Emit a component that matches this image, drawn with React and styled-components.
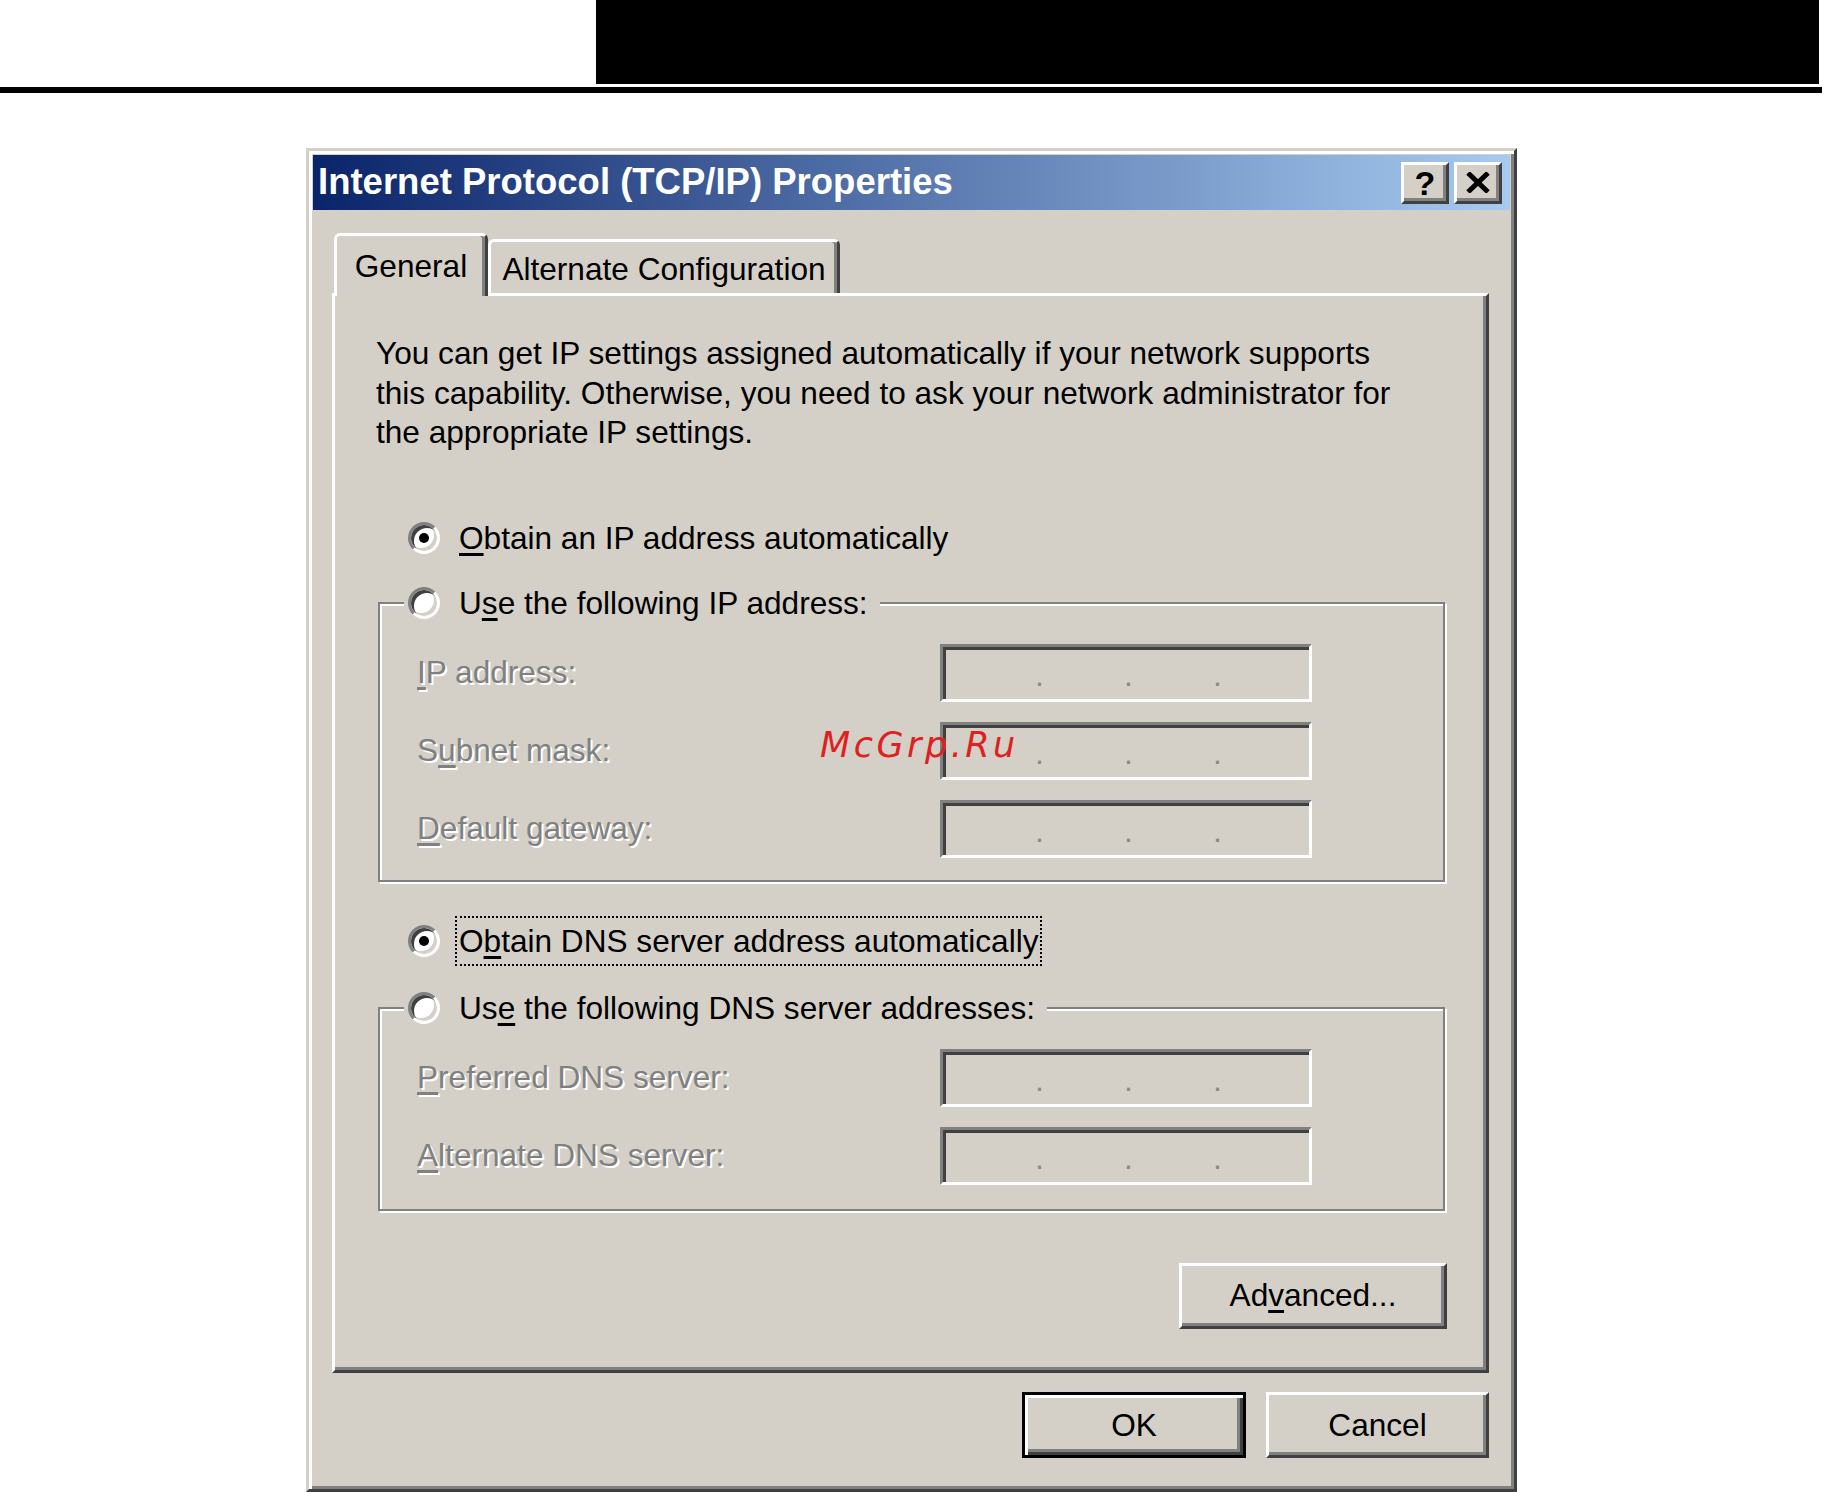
import React from "react";
import styled, { createGlobalStyle } from "styled-components";

const FACE = "#d4d0c8";

const GlobalStyle = createGlobalStyle`
  html, body {
    margin: 0;
    padding: 0;
    background: #ffffff;
  }
  body {
    font-family: "Liberation Sans", Arial, sans-serif;
  }
`;

const Page = styled.div`
  position: relative;
  width: 1826px;
  height: 1492px;
  overflow: hidden;
  background: #fff;
`;

const Header = styled.header`
  width: 1822px;
`;

const HeaderBar = styled.div`
  display: flex;
  justify-content: flex-end;
  padding-right: 3px;
`;

const BlackBlock = styled.div`
  width: 1223px;
  height: 84px;
  background: #000;
`;

const Rule = styled.div`
  height: 6px;
  margin-top: 3px;
  background: #000;
`;

const Dialog = styled.div`
  box-sizing: border-box;
  width: 1211px;
  height: 1344px;
  margin: 55px 0 0 306px;
  padding: 4px;
  background: ${FACE};
  border: 3px solid;
  border-color: ${FACE} #404040 #404040 ${FACE};
  box-shadow: inset 3px 3px 0 #fff, inset -3px -3px 0 #808080;
`;

const TitleBar = styled.div`
  display: flex;
  align-items: center;
  height: 55px;
  padding: 0 8px 0 5px;
  background: linear-gradient(to right, #0a246a, #a6caf0);
`;

const Title = styled.h1`
  flex: 1;
  margin: 0;
  color: #fff;
  font: bold 36.5px/1 "Liberation Sans", Arial, sans-serif;
  white-space: nowrap;
`;

const CaptionGroup = styled.div`
  display: flex;
  gap: 5px;
`;

const CaptionButton = styled.button`
  box-sizing: border-box;
  width: 48px;
  height: 42px;
  padding: 0;
  display: flex;
  align-items: center;
  justify-content: center;
  background: ${FACE};
  border: 3px solid;
  border-color: #fff #404040 #404040 #fff;
  box-shadow: inset -3px -3px 0 #808080;
  color: #000;
  font: bold 34px/1 "Liberation Sans", Arial, sans-serif;
`;

const Body = styled.div`
  padding: 23px 21px 0 19px;
`;

const TabStrip = styled.div`
  position: relative;
  z-index: 1;
  display: flex;
  align-items: flex-end;
  height: 60px;
  padding-left: 2px;
`;

const Tab = styled.div`
  box-sizing: border-box;
  display: flex;
  align-items: center;
  justify-content: center;
  width: ${(p) => p.$w}px;
  height: ${(p) => (p.$active ? 63 : 54)}px;
  margin-bottom: ${(p) => (p.$active ? -3 : 0)}px;
  padding-top: ${(p) => (p.$active ? 0 : 4)}px;
  background: ${FACE};
  border: 3px solid;
  border-bottom: none;
  border-color: #fff #404040 transparent #fff;
  border-radius: 6px 6px 0 0;
  box-shadow: inset -3px 0 0 #808080;
  color: #000;
  font-size: 31.6px;
  white-space: nowrap;
`;

const Panel = styled.div`
  box-sizing: border-box;
  display: flex;
  flex-direction: column;
  height: 1080px;
  padding: 38px 41px 0 41px;
  border: 3px solid;
  border-color: #fff #404040 #404040 #fff;
  box-shadow: inset -3px -3px 0 #808080;
`;

const Intro = styled.p`
  margin: 0;
  color: #000;
  font-size: 31.6px;
  line-height: 39.5px;
  white-space: nowrap;
`;

const RadioRow = styled.div`
  display: flex;
  align-items: center;
  height: 50px;
  margin: ${(p) => p.$top}px 0 0 32px;
`;

const Legend = styled.div`
  display: flex;
  align-items: center;
  width: fit-content;
  height: 50px;
  margin: -26px 0 0 -13px;
  padding: 0 8px 0 4px;
  background: ${FACE};
`;

const RadioCircle = styled.span`
  box-sizing: border-box;
  flex: none;
  display: flex;
  align-items: center;
  justify-content: center;
  width: 32px;
  height: 32px;
  border-radius: 50%;
  border: 3px solid;
  border-color: #808080 #fff #fff #808080;
  background: #fff;
  box-shadow: inset 3px 3px 0 #404040, inset -3px -3px 0 ${FACE};

  &::after {
    content: "";
    display: ${(p) => (p.$checked ? "block" : "none")};
    width: 10px;
    height: 10px;
    border-radius: 50%;
    background: #000;
  }
`;

const RadioLabel = styled.span`
  margin-left: 15px;
  padding: 2px;
  border: 2px dotted ${(p) => (p.$focused ? "#000" : "transparent")};
  color: #000;
  font-size: 31.6px;
  line-height: 42px;
  white-space: nowrap;
`;

const Key = styled.u`
  text-decoration-thickness: 3px;
  text-underline-offset: 4px;
`;

const GroupBox = styled.div`
  margin: ${(p) => p.$top}px 0 0 2px;
  padding: 0 0 ${(p) => p.$bottom}px 37px;
  border: 2px solid #808080;
  box-shadow: inset 2px 2px 0 #fff, 2px 2px 0 #fff;
`;

const FieldGrid = styled.div`
  display: grid;
  grid-template-columns: 523px 372px;
  grid-auto-rows: 58px;
  row-gap: 20px;
  align-items: center;
  margin-top: 16px;
`;

const FieldLabel = styled.span`
  color: #808080;
  text-shadow: 2px 2px 0 #fff;
  font-size: 31.6px;
  white-space: nowrap;
`;

const IpBox = styled.div`
  box-sizing: border-box;
  display: grid;
  grid-template-columns: 92px 9px 80px 9px 80px 9px 1fr;
  align-items: center;
  height: 58px;
  background: ${FACE};
  border: 3px solid;
  border-color: #808080 #fff #fff #808080;
  box-shadow: inset 3px 3px 0 #404040, inset -3px -3px 0 ${FACE};
`;

const IpDot = styled.span`
  color: #8a8a8a;
  font-size: 32px;
  line-height: 1;
  text-align: center;
  padding-top: 4px;
`;

const PushButton = styled.button`
  box-sizing: border-box;
  width: ${(p) => p.$w}px;
  height: 66px;
  padding: 0;
  background: ${FACE};
  color: #000;
  font: 31.6px "Liberation Sans", Arial, sans-serif;
  border: 3px solid;
  border-color: ${(p) => (p.$default ? "#000" : "#fff #404040 #404040 #fff")};
  box-shadow: ${(p) =>
    p.$default
      ? "inset 3px 3px 0 #fff, inset -3px -3px 0 #404040, inset -6px -6px 0 #808080"
      : "inset -3px -3px 0 #808080"};
`;

const AdvancedButton = styled(PushButton)`
  align-self: flex-end;
  margin: 52px -2px 0 0;
`;

const ButtonRow = styled.div`
  display: flex;
  justify-content: flex-end;
  gap: 20px;
  margin-top: 19px;
`;

const Watermark = styled.div`
  position: absolute;
  left: 820px;
  top: 725px;
  color: #df2020;
  font: italic 35px/40px "DejaVu Sans", "Liberation Sans", sans-serif;
  letter-spacing: 3.5px;
`;

function CloseGlyph() {
  return (
    <svg width="24" height="21" viewBox="0 0 24 21">
      <path d="M2 1 L22 20 M22 1 L2 20" stroke="#000" strokeWidth="5" />
    </svg>
  );
}

function IpField() {
  return (
    <IpBox>
      <span />
      <IpDot>.</IpDot>
      <span />
      <IpDot>.</IpDot>
      <span />
      <IpDot>.</IpDot>
      <span />
    </IpBox>
  );
}

function Radio({ checked, focused, children }) {
  return (
    <>
      <RadioCircle $checked={checked} />
      <RadioLabel $focused={focused}>{children}</RadioLabel>
    </>
  );
}

export default function App() {
  return (
    <Page>
      <GlobalStyle />
      <Header>
        <HeaderBar>
          <BlackBlock />
        </HeaderBar>
        <Rule />
      </Header>

      <Dialog>
        <TitleBar>
          <Title>Internet Protocol (TCP/IP) Properties</Title>
          <CaptionGroup>
            <CaptionButton>?</CaptionButton>
            <CaptionButton>
              <CloseGlyph />
            </CaptionButton>
          </CaptionGroup>
        </TitleBar>

        <Body>
          <TabStrip>
            <Tab $active $w={154}>General</Tab>
            <Tab $w={352}>Alternate Configuration</Tab>
          </TabStrip>

          <Panel>
            <Intro>
              You can get IP settings assigned automatically if your network supports
              <br />
              this capability. Otherwise, you need to ask your network administrator for
              <br />
              the appropriate IP settings.
            </Intro>

            <RadioRow $top={60}>
              <Radio checked>
                <Key>O</Key>btain an IP address automatically
              </Radio>
            </RadioRow>

            <GroupBox $top={39} $bottom={22}>
              <Legend>
                <Radio>
                  U<Key>s</Key>e the following IP address:
                </Radio>
              </Legend>
              <FieldGrid>
                <FieldLabel>
                  <Key>I</Key>P address:
                </FieldLabel>
                <IpField />
                <FieldLabel>
                  S<Key>u</Key>bnet mask:
                </FieldLabel>
                <IpField />
                <FieldLabel>
                  <Key>D</Key>efault gateway:
                </FieldLabel>
                <IpField />
              </FieldGrid>
            </GroupBox>

            <RadioRow $top={34}>
              <Radio checked focused>
                O<Key>b</Key>tain DNS server address automatically
              </Radio>
            </RadioRow>

            <GroupBox $top={41} $bottom={24}>
              <Legend>
                <Radio>
                  Us<Key>e</Key> the following DNS server addresses:
                </Radio>
              </Legend>
              <FieldGrid>
                <FieldLabel>
                  <Key>P</Key>referred DNS server:
                </FieldLabel>
                <IpField />
                <FieldLabel>
                  <Key>A</Key>lternate DNS server:
                </FieldLabel>
                <IpField />
              </FieldGrid>
            </GroupBox>

            <AdvancedButton $w={268}>
              Ad<Key>v</Key>anced...
            </AdvancedButton>
          </Panel>

          <ButtonRow>
            <PushButton $default $w={224}>
              OK
            </PushButton>
            <PushButton $w={223}>Cancel</PushButton>
          </ButtonRow>
        </Body>
      </Dialog>

      <Watermark>McGrp.Ru</Watermark>
    </Page>
  );
}
